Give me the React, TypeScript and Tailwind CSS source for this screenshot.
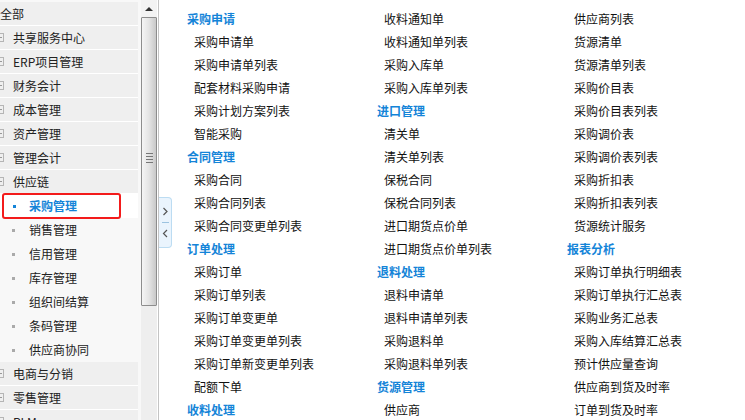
import React from 'react';

const font = { fontFamily: '"SimSun", "Noto Sans CJK SC", "Liberation Sans", sans-serif' };

type TreeItem = { label: string; level: 0 | 1 | 2; active?: boolean };

const tree: TreeItem[] = [
  { label: '全部', level: 0 },
  { label: '共享服务中心', level: 1 },
  { label: 'ERP项目管理', level: 1 },
  { label: '财务会计', level: 1 },
  { label: '成本管理', level: 1 },
  { label: '资产管理', level: 1 },
  { label: '管理会计', level: 1 },
  { label: '供应链', level: 1 },
  { label: '采购管理', level: 2, active: true },
  { label: '销售管理', level: 2 },
  { label: '信用管理', level: 2 },
  { label: '库存管理', level: 2 },
  { label: '组织间结算', level: 2 },
  { label: '条码管理', level: 2 },
  { label: '供应商协同', level: 2 },
  { label: '电商与分销', level: 1 },
  { label: '零售管理', level: 1 },
  { label: 'PLM', level: 1 },
];

type Entry = { text: string; head?: boolean };
const h = (text: string): Entry => ({ text, head: true });
const i = (text: string): Entry => ({ text });

const columns: Entry[][] = [
  [
    h('采购申请'), i('采购申请单'), i('采购申请单列表'), i('配套材料采购申请'), i('采购计划方案列表'), i('智能采购'),
    h('合同管理'), i('采购合同'), i('采购合同列表'), i('采购合同变更单列表'),
    h('订单处理'), i('采购订单'), i('采购订单列表'), i('采购订单变更单'), i('采购订单变更单列表'), i('采购订单新变更单列表'), i('配额下单'),
    h('收料处理'),
  ],
  [
    i('收料通知单'), i('收料通知单列表'), i('采购入库单'), i('采购入库单列表'),
    h('进口管理'), i('清关单'), i('清关单列表'), i('保税合同'), i('保税合同列表'), i('进口期货点价单'), i('进口期货点价单列表'),
    h('退料处理'), i('退料申请单'), i('退料申请单列表'), i('采购退料单'), i('采购退料单列表'),
    h('货源管理'), i('供应商'),
  ],
  [
    i('供应商列表'), i('货源清单'), i('货源清单列表'), i('采购价目表'), i('采购价目表列表'), i('采购调价表'), i('采购调价表列表'),
    i('采购折扣表'), i('采购折扣表列表'), i('货源统计服务'),
    h('报表分析'), i('采购订单执行明细表'), i('采购订单执行汇总表'), i('采购业务汇总表'), i('采购入库结算汇总表'), i('预计供应量查询'),
    i('供应商到货及时率'), i('订单到货及时率'),
  ],
];

function TreeRow({ item }: { item: TreeItem }) {
  if (item.level === 0) {
    return (
      <div className="h-[24px] flex items-center bg-[#efefef] border-b border-white text-[12px] text-[#222]">
        {item.label}
      </div>
    );
  }
  if (item.level === 1) {
    return (
      <div className="h-[24px] flex items-center bg-[#efefef] border-b border-white text-[12px] text-[#222]">
        <span className="-ml-[5px] w-[9px] h-[9px] border border-[#b5b5b5] flex items-center justify-center flex-shrink-0">
          <span className="w-[5px] h-px bg-[#999]"></span>
        </span>
        <span className="ml-[9px]">{item.label}</span>
      </div>
    );
  }
  if (item.active) {
    return (
      <div className="h-[24px] flex items-center bg-white">
        <div className="ml-[2px] w-[119px] h-[26px] border-2 border-[#f31b1b] rounded-[3px] flex items-center text-[12px] font-bold text-[#1484d8]">
          <span className="ml-[9px] w-[3px] h-[3px] bg-[#1484d8]"></span>
          <span className="ml-[13px]">{item.label}</span>
        </div>
      </div>
    );
  }
  return (
    <div className="h-[24px] flex items-center bg-[#f8f8f8] text-[12px] text-[#222]">
      <span className="ml-[12px] w-[3px] h-[3px] bg-[#aaa]"></span>
      <span className="ml-[14px]">{item.label}</span>
    </div>
  );
}

export default function App() {
  return (
    <div className="w-[745px] h-[420px] flex overflow-hidden bg-white" style={font}>
      {/* Left tree */}
      <div className="w-[141px] flex-shrink-0 overflow-hidden bg-[#f8f8f8] pt-[2px]">
        <div className="w-[138px]">
          {tree.map(t => (
            <TreeRow key={t.label} item={t} />
          ))}
        </div>
      </div>

      {/* Scrollbar */}
      <div className="w-[16px] flex-shrink-0 flex flex-col bg-[#efefef]">
        <div className="h-[17px] flex items-center justify-center bg-[#f3f3f3]">
          <span className="w-0 h-0 border-l-[4px] border-r-[4px] border-b-[4px] border-l-transparent border-r-transparent border-b-[#333]"></span>
        </div>
        <div className="h-[289px] border border-[#8d8d8d] bg-gradient-to-r from-[#f5f5f5] via-[#e4e4e4] to-[#c9c9c9] flex items-center justify-center rounded-[1px]">
          <div className="flex flex-col gap-[2px] -mt-[8px]">
            <span className="w-[7px] h-px bg-[#777]"></span>
            <span className="w-[7px] h-px bg-[#777]"></span>
            <span className="w-[7px] h-px bg-[#777]"></span>
            <span className="w-[7px] h-px bg-[#777]"></span>
          </div>
        </div>
        <div className="flex-1 bg-[#eeeeee]"></div>
      </div>
      <div className="w-px flex-shrink-0 bg-white"></div>
      <div className="w-px flex-shrink-0 bg-[#c4c4c4]"></div>

      {/* Main */}
      <div className="relative flex-1 flex pt-[7px] pl-[28px]">
        <div className="absolute left-0 top-[197px] w-[13px] h-[51px] bg-[#eaf4fd] border border-[#bcdcf2] border-l-0 rounded-r-[4px] flex flex-col items-center">
          <svg width="7" height="9" viewBox="0 0 7 9" className="mt-[9px]">
            <path d="M1.5 1 L5 4.5 L1.5 8" fill="none" stroke="#555" strokeWidth="1.2" />
          </svg>
          <span className="mt-[6px] w-[7px] h-px bg-[#9cc3e0]"></span>
          <svg width="7" height="9" viewBox="0 0 7 9" className="mt-[6px]">
            <path d="M5 1 L1.5 4.5 L5 8" fill="none" stroke="#555" strokeWidth="1.2" />
          </svg>
        </div>
        {columns.map((col, ci) => (
          <div key={ci} className="w-[190px] flex-shrink-0">
            {col.map(e => (
              <div
                key={e.text}
                className={`h-[23px] leading-[23px] text-[12px] whitespace-nowrap ${
                  e.head ? 'font-bold text-[#1484d8]' : 'pl-[7px] text-[#111]'
                }`}
              >
                {e.text}
              </div>
            ))}
          </div>
        ))}
      </div>
    </div>
  );
}
